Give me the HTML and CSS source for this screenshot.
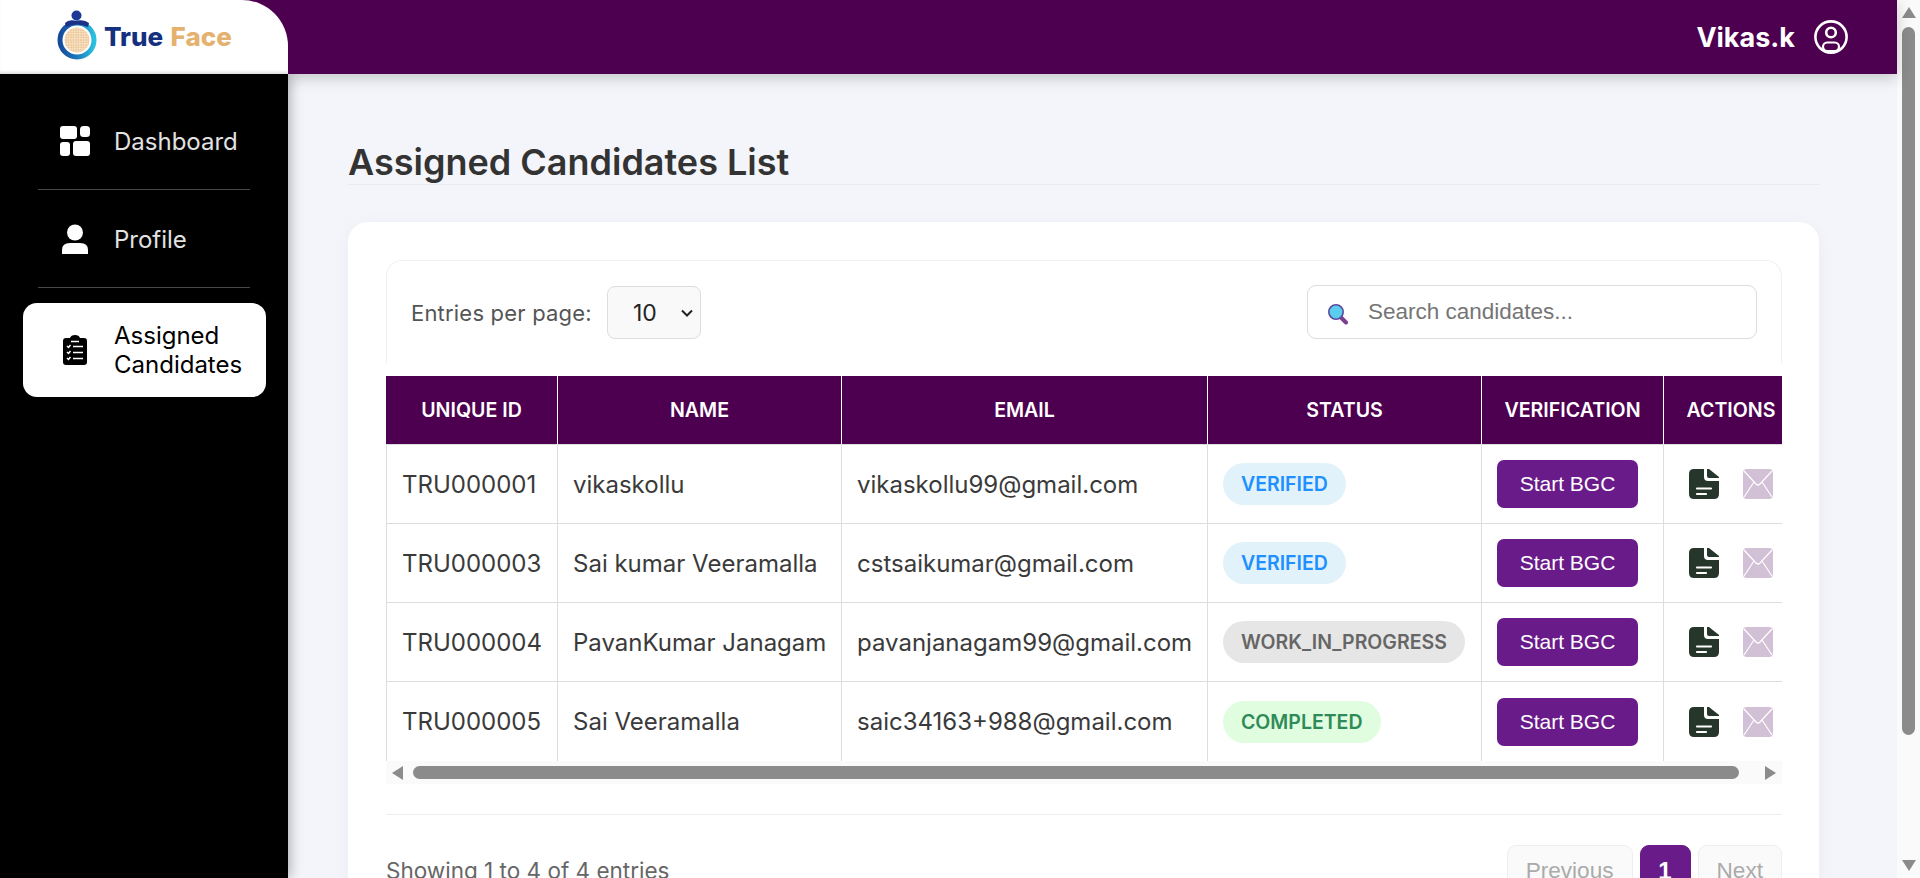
FILE: index.html
```html
<!DOCTYPE html>
<html lang="en">
<head>
    <meta charset="UTF-8">
    <meta name="viewport" content="width=device-width, initial-scale=1.0">
    <title>True Face - Assigned Candidates</title>
    <link rel="stylesheet" href="styles.css">
</head>
<body>
<svg class="icon-defs" width="0" height="0">
    <symbol id="icon-file" viewBox="0 0 30 30">
        <path d="M5 0 H15 V8 Q15 12 19 12 H30 V25 Q30 30 25 30 H5 Q0 30 0 25 V5 Q0 0 5 0 Z" fill="#27362a"/>
        <path d="M18 0 H20 L30 8 V9 H20 Q18 9 18 7 Z" fill="#27362a"/>
        <path d="M8 19.5 H22 M8 25 H17" stroke="#fff" stroke-width="2.2" stroke-linecap="round"/>
    </symbol>
    <symbol id="icon-mail" viewBox="0 0 30 30">
        <rect width="30" height="30" rx="4" fill="#d2c0d6"/>
        <path d="M1 2 L13 15 Q15 17 17 15 L29 2 M1 28 L11 13 M29 28 L19 13" stroke="#fff" stroke-width="1.2" fill="none"/>
    </symbol>
</svg>
<div class="app">
    <div class="shell">
        <header class="topbar">
            <div class="logo-box">
                <svg class="logo-mark" width="44" height="52" viewBox="0 0 44 52">
                    <defs>
                        <linearGradient id="ring" x1="0" y1="0" x2="1" y2="0">
                            <stop offset="0" stop-color="#164a9c"/>
                            <stop offset="0.55" stop-color="#1f7fc0"/>
                            <stop offset="1" stop-color="#2cc0e0"/>
                        </linearGradient>
                        <pattern id="dots" width="2.5" height="2.5" patternUnits="userSpaceOnUse">
                            <rect width="2.5" height="2.5" fill="#f6e0c2"/>
                            <circle cx="1" cy="1" r="0.7" fill="#e8b67c"/>
                        </pattern>
                    </defs>
                    <circle cx="22" cy="31" r="17" fill="none" stroke="url(#ring)" stroke-width="5"/>
                    <circle cx="22" cy="31" r="12.5" fill="url(#dots)"/>
                    <circle cx="21.5" cy="6.5" r="5" fill="#1e3a96"/>
                    <path d="M10 14 Q14 10 21 12 Q29 10 34 14 L33 18 Q22 13 11 18 Z" fill="#1b3187"/>
                </svg>
                <span class="logo-text"><b class="logo-true">True</b> <b class="logo-face">Face</b></span>
            </div>
            <div class="user-box">
                <span class="user-name">Vikas.k</span>
                <svg width="36" height="36" viewBox="0 0 36 36" fill="none" stroke="#fff" stroke-width="2.6">
                    <circle cx="18" cy="18" r="15.6"/>
                    <circle cx="18" cy="13.5" r="4.8"/>
                    <rect x="10" y="23.5" width="16" height="8.5" rx="4.2" stroke-width="2.2"/>
                </svg>
            </div>
        </header>

        <div class="body-row">
            <aside class="sidebar">
                <a class="nav-item">
                    <svg width="30" height="30" viewBox="0 0 30 30" fill="#fff">
                        <rect x="0" y="0" width="17" height="13" rx="3"/>
                        <rect x="20" y="0" width="10" height="11" rx="3.5"/>
                        <rect x="0" y="16" width="10" height="14" rx="3"/>
                        <rect x="13" y="15" width="17" height="15" rx="3"/>
                    </svg>
                    <span>Dashboard</span>
                </a>
                <div class="nav-sep"></div>
                <a class="nav-item">
                    <svg width="30" height="30" viewBox="0 0 30 30" fill="#fff">
                        <circle cx="15" cy="8.5" r="8"/>
                        <path d="M2 30 V26 Q2 19 10 19 H20 Q28 19 28 26 V30 Z"/>
                    </svg>
                    <span>Profile</span>
                </a>
                <div class="nav-sep"></div>
                <a class="nav-item active">
                    <svg width="30" height="30" viewBox="0 0 30 30">
                        <path d="M6 3 H10 Q11 0 15 0 Q19 0 20 3 H24 Q27 3 27 6 V27 Q27 30 24 30 H6 Q3 30 3 27 V6 Q3 3 6 3 Z" fill="#000"/>
                        <g stroke="#fff" stroke-width="1.5" fill="none">
                            <path d="M11 6.5 H19"/>
                            <path d="M7 11 L8.5 12.5 L10.5 10"/>
                            <path d="M7 17 L8.5 18.5 L10.5 16"/>
                            <path d="M7 23 L8.5 24.5 L10.5 22"/>
                            <path d="M13 11.5 H23"/>
                            <path d="M13 17.5 H23"/>
                            <path d="M13 23.5 H23"/>
                        </g>
                    </svg>
                    <span>Assigned Candidates</span>
                </a>
            </aside>

            <main class="content">
                <h1 class="page-title">Assigned Candidates List</h1>

                <section class="card">
                    <div class="toolbar">
                        <div class="entries">
                            <label for="entries">Entries per page:</label>
                            <select id="entries">
                                <option>10</option>
                                <option>25</option>
                                <option>50</option>
                            </select>
                        </div>
                        <div class="search">
                            <svg class="search-icon" width="22" height="22" viewBox="0 0 22 22">
                                <path d="M13.5 14 L19 19.5" stroke="#7d3f8f" stroke-width="4" stroke-linecap="round"/>
                                <circle cx="9" cy="9" r="7.2" fill="#5bcdee" stroke="#5a4a9c" stroke-width="1.6"/>
                            </svg>
                            <input type="text" placeholder="Search candidates...">
                        </div>
                    </div>

                    <div class="table-wrap">
                        <table class="candidates">
                            <colgroup>
                                <col class="col-id"><col class="col-name"><col class="col-email">
                                <col class="col-status"><col class="col-verify"><col class="col-actions">
                            </colgroup>
                            <thead>
                                <tr>
                                    <th>UNIQUE ID</th>
                                    <th>NAME</th>
                                    <th>EMAIL</th>
                                    <th>STATUS</th>
                                    <th>VERIFICATION</th>
                                    <th>ACTIONS</th>
                                </tr>
                            </thead>
                            <tbody>
                                <tr>
                                    <td>TRU000001</td>
                                    <td>vikaskollu</td>
                                    <td>vikaskollu99@gmail.com</td>
                                    <td><span class="badge verified">VERIFIED</span></td>
                                    <td><button class="bgc-btn">Start BGC</button></td>
                                    <td>
                                        <div class="actions">
                                            <svg width="30" height="30"><use href="#icon-file"/></svg>
                                            <svg width="30" height="30"><use href="#icon-mail"/></svg>
                                        </div>
                                    </td>
                                </tr>
                                <tr>
                                    <td>TRU000003</td>
                                    <td>Sai kumar Veeramalla</td>
                                    <td>cstsaikumar@gmail.com</td>
                                    <td><span class="badge verified">VERIFIED</span></td>
                                    <td><button class="bgc-btn">Start BGC</button></td>
                                    <td>
                                        <div class="actions">
                                            <svg width="30" height="30"><use href="#icon-file"/></svg>
                                            <svg width="30" height="30"><use href="#icon-mail"/></svg>
                                        </div>
                                    </td>
                                </tr>
                                <tr>
                                    <td>TRU000004</td>
                                    <td>PavanKumar Janagam</td>
                                    <td>pavanjanagam99@gmail.com</td>
                                    <td><span class="badge progress">WORK_IN_PROGRESS</span></td>
                                    <td><button class="bgc-btn">Start BGC</button></td>
                                    <td>
                                        <div class="actions">
                                            <svg width="30" height="30"><use href="#icon-file"/></svg>
                                            <svg width="30" height="30"><use href="#icon-mail"/></svg>
                                        </div>
                                    </td>
                                </tr>
                                <tr>
                                    <td>TRU000005</td>
                                    <td>Sai Veeramalla</td>
                                    <td>saic34163+988@gmail.com</td>
                                    <td><span class="badge completed">COMPLETED</span></td>
                                    <td><button class="bgc-btn">Start BGC</button></td>
                                    <td>
                                        <div class="actions">
                                            <svg width="30" height="30"><use href="#icon-file"/></svg>
                                            <svg width="30" height="30"><use href="#icon-mail"/></svg>
                                        </div>
                                    </td>
                                </tr>
                            </tbody>
                        </table>
                    </div>

                    <div class="hbar">
                        <span class="arrow arrow-left"></span>
                        <span class="hbar-thumb"></span>
                        <span class="arrow arrow-right"></span>
                    </div>

                    <div class="table-footer">
                        <span class="showing">Showing 1 to 4 of 4 entries</span>
                        <div class="pager">
                            <button class="page-btn">Previous</button>
                            <button class="page-btn current">1</button>
                            <button class="page-btn">Next</button>
                        </div>
                    </div>
                </section>
            </main>
        </div>
    </div>

    <div class="vbar">
        <span class="arrow arrow-up"></span>
        <span class="vbar-thumb"></span>
        <span class="arrow arrow-down"></span>
    </div>
</div>
</body>
</html>
```

FILE: styles.css
```css
* {
    box-sizing: border-box;
}
html, body {
    margin: 0;
    height: 100%;
    overflow: hidden;
}
body {
    font-family: Inter, "Liberation Sans", sans-serif;
    background-color: #f4f5fa;
    color: #333;
}
.icon-defs {
    display: block;
    height: 0;
}
.app {
    display: flex;
    height: 878px;
}
.shell {
    flex: 1;
    min-width: 0;
    display: flex;
    flex-direction: column;
}

/* top bar */
.topbar {
    height: 74px;
    flex-shrink: 0;
    display: flex;
    justify-content: space-between;
    align-items: center;
    background-color: #4e0050;
    box-shadow: 0 4px 14px rgba(0,0,0,0.2);
    position: relative;
    z-index: 2;
}
.logo-box {
    width: 288px;
    height: 74px;
    background: #fff;
    border-top-right-radius: 46px;
    display: flex;
    align-items: center;
    padding-left: 55px;
    gap: 5px;
    box-shadow: inset 0 -4px 4px -3px rgba(0,0,0,0.2);
}
.logo-mark {
    margin-top: -5px;
}
.logo-text {
    margin-top: -2px;
    font-size: 26px;
    white-space: nowrap;
}
.logo-text b {
    font-weight: 800;
}
.logo-true {
    color: #14307f;
}
.logo-face {
    color: #e5b16e;
}
.user-box {
    display: flex;
    align-items: center;
    gap: 18px;
    padding-right: 48px;
}
.user-name {
    color: #fff;
    font-size: 27px;
    font-weight: 700;
}

.body-row {
    flex: 1;
    min-height: 0;
    display: flex;
}

/* sidebar */
.sidebar {
    width: 288px;
    flex-shrink: 0;
    background: #000;
    padding-top: 18px;
    box-shadow: 2px 0 12px rgba(0,0,0,0.3);
    position: relative;
    z-index: 1;
}
.nav-item {
    margin: 0 22px 0 23px;
    height: 97px;
    padding: 1px 16px 0 37px;
    display: flex;
    align-items: center;
    gap: 24px;
    color: #e2e2e2;
    font-size: 24px;
    line-height: 29px;
    border-radius: 14px;
}
.nav-item svg {
    flex-shrink: 0;
}
.nav-sep {
    height: 1px;
    margin: 0 38px;
    background: #484848;
}
.nav-item.active {
    height: 94px;
    margin-top: 15px;
    padding-top: 0;
    background: #fff;
    color: #000;
}

/* main area */
.content {
    flex: 1;
    min-width: 0;
    overflow: hidden;
    padding: 60px 78px 0 60px;
}
.page-title {
    margin: 0 0 37px;
    height: 51px;
    font-size: 36px;
    line-height: 56px;
    font-weight: 600;
    color: #333;
    border-bottom: 1px solid #e9e9ef;
}
.card {
    background: #fff;
    border-radius: 20px;
    padding: 38px 37px 30px 38px;
    box-shadow: 0 4px 20px rgba(0,0,0,0.04);
}
.toolbar {
    height: 103px;
    margin-bottom: 13px;
    padding: 25px 24px 24px 24px;
    display: flex;
    justify-content: space-between;
    align-items: flex-start;
    border: 1px solid #f0f0f0;
    border-bottom: none;
    border-radius: 16px 16px 0 0;
}
.entries {
    display: flex;
    align-items: center;
    gap: 15px;
    font-size: 22px;
    color: #555;
    letter-spacing: 0.2px;
}
.entries select {
    width: 94px;
    height: 53px;
    padding: 0 10px 0 25px;
    font-family: Inter, sans-serif;
    font-size: 23px;
    color: #222;
    background: #f9f9f9 url("data:image/svg+xml,%3Csvg xmlns='http://www.w3.org/2000/svg' width='12' height='8' viewBox='0 0 12 8'%3E%3Cpath d='M1 1.5 L6 6.5 L11 1.5' fill='none' stroke='%23222' stroke-width='2'/%3E%3C/svg%3E") no-repeat right 7px center;
    border: 1px solid #ddd;
    border-radius: 8px;
    appearance: none;
}
.search {
    position: relative;
    width: 450px;
}
.search-icon {
    position: absolute;
    left: 20px;
    top: 17px;
}
.search input {
    width: 100%;
    height: 54px;
    padding: 0 16px 0 60px;
    font-family: "Liberation Sans", Arial, sans-serif;
    font-size: 22.5px;
    border: 1px solid #ddd;
    border-radius: 9px;
    margin-top: -1px;
}
.search input::placeholder {
    color: #757575;
}

/* table */
.table-wrap {
    overflow: hidden;
}
.candidates {
    width: 1413px;
    table-layout: fixed;
    border-collapse: separate;
    border-spacing: 0;
}
.col-id { width: 172px; }
.col-name { width: 284px; }
.col-email { width: 366px; }
.col-status { width: 274px; }
.col-verify { width: 182px; }
.col-actions { width: 135px; }
.candidates th {
    height: 69px;
    padding: 0;
    background: #4e0050;
    color: #fff;
    font-size: 19.6px;
    font-weight: 600;
    border-right: 1px solid #fff;
    border-bottom: 1px solid #ddd;
}
.candidates td {
    height: 79px;
    padding: 0 15px;
    font-size: 24px;
    color: #3a3a3a;
    border-right: 1px solid #ddd;
    border-bottom: 1px solid #ddd;
    white-space: nowrap;
}
.candidates td:first-child {
    border-left: 1px solid #ddd;
}
.candidates tr:last-child td {
    border-bottom: none;
}
.badge {
    display: inline-block;
    height: 42px;
    padding: 0 18px;
    border-radius: 21px;
    font-size: 19.5px;
    font-weight: 600;
    line-height: 43px;
}
.verified {
    background: #e1f2fa;
    color: #1e90ff;
}
.progress {
    background: #e6e6e6;
    color: #666;
}
.completed {
    background: #e0fde0;
    color: #2e8b57;
}
.bgc-btn {
    width: 141px;
    height: 48px;
    background: #6a1b8a;
    color: #fff;
    border: none;
    border-radius: 7px;
    font-family: "Liberation Sans", Arial, sans-serif;
    font-size: 21px;
    display: block;
}
.actions {
    display: flex;
    gap: 24px;
    padding-left: 10px;
}

/* fake scrollbars */
.hbar {
    height: 23px;
    background: #fafafa;
    display: flex;
    align-items: center;
    padding: 0 6px;
}
.hbar-thumb {
    width: 1326px;
    height: 13px;
    margin-left: 10px;
    background: #8b8b8b;
    border-radius: 7px;
}
.vbar {
    width: 23px;
    flex-shrink: 0;
    background: #fafafa;
    display: flex;
    flex-direction: column;
    align-items: center;
    padding: 7px 0 7px;
}
.vbar-thumb {
    width: 13px;
    height: 708px;
    margin-top: 9px;
    margin-bottom: auto;
    background: #8b8b8b;
    border-radius: 7px;
}
.arrow {
    width: 0;
    height: 0;
    display: block;
    flex-shrink: 0;
}
.arrow-left {
    border-top: 7px solid transparent;
    border-bottom: 7px solid transparent;
    border-right: 11px solid #8b8b8b;
}
.arrow-right {
    margin-left: auto;
    border-top: 7px solid transparent;
    border-bottom: 7px solid transparent;
    border-left: 11px solid #8b8b8b;
}
.arrow-up {
    border-left: 7px solid transparent;
    border-right: 7px solid transparent;
    border-bottom: 11px solid #8b8b8b;
}
.arrow-down {
    border-left: 7px solid transparent;
    border-right: 7px solid transparent;
    border-top: 11px solid #8b8b8b;
}

/* footer */
.table-footer {
    margin-top: 30px;
    padding-top: 30px;
    border-top: 1px solid #eee;
    display: flex;
    justify-content: space-between;
    align-items: center;
}
.showing {
    margin-bottom: 2px;
    font-size: 22.5px;
    color: #666;
}
.pager {
    display: flex;
    gap: 7px;
}
.page-btn {
    height: 52px;
    padding: 0 18px;
    background: #fafafa;
    color: #aaa;
    border: 1px solid #eee;
    border-radius: 9px;
    font-family: "Liberation Sans", Arial, sans-serif;
    font-size: 22.6px;
}
.page-btn.current {
    width: 51px;
    padding: 0;
    background: #6a1b8a;
    border-color: #6a1b8a;
    color: #fff;
    font-size: 24px;
    font-weight: 700;
}
```
